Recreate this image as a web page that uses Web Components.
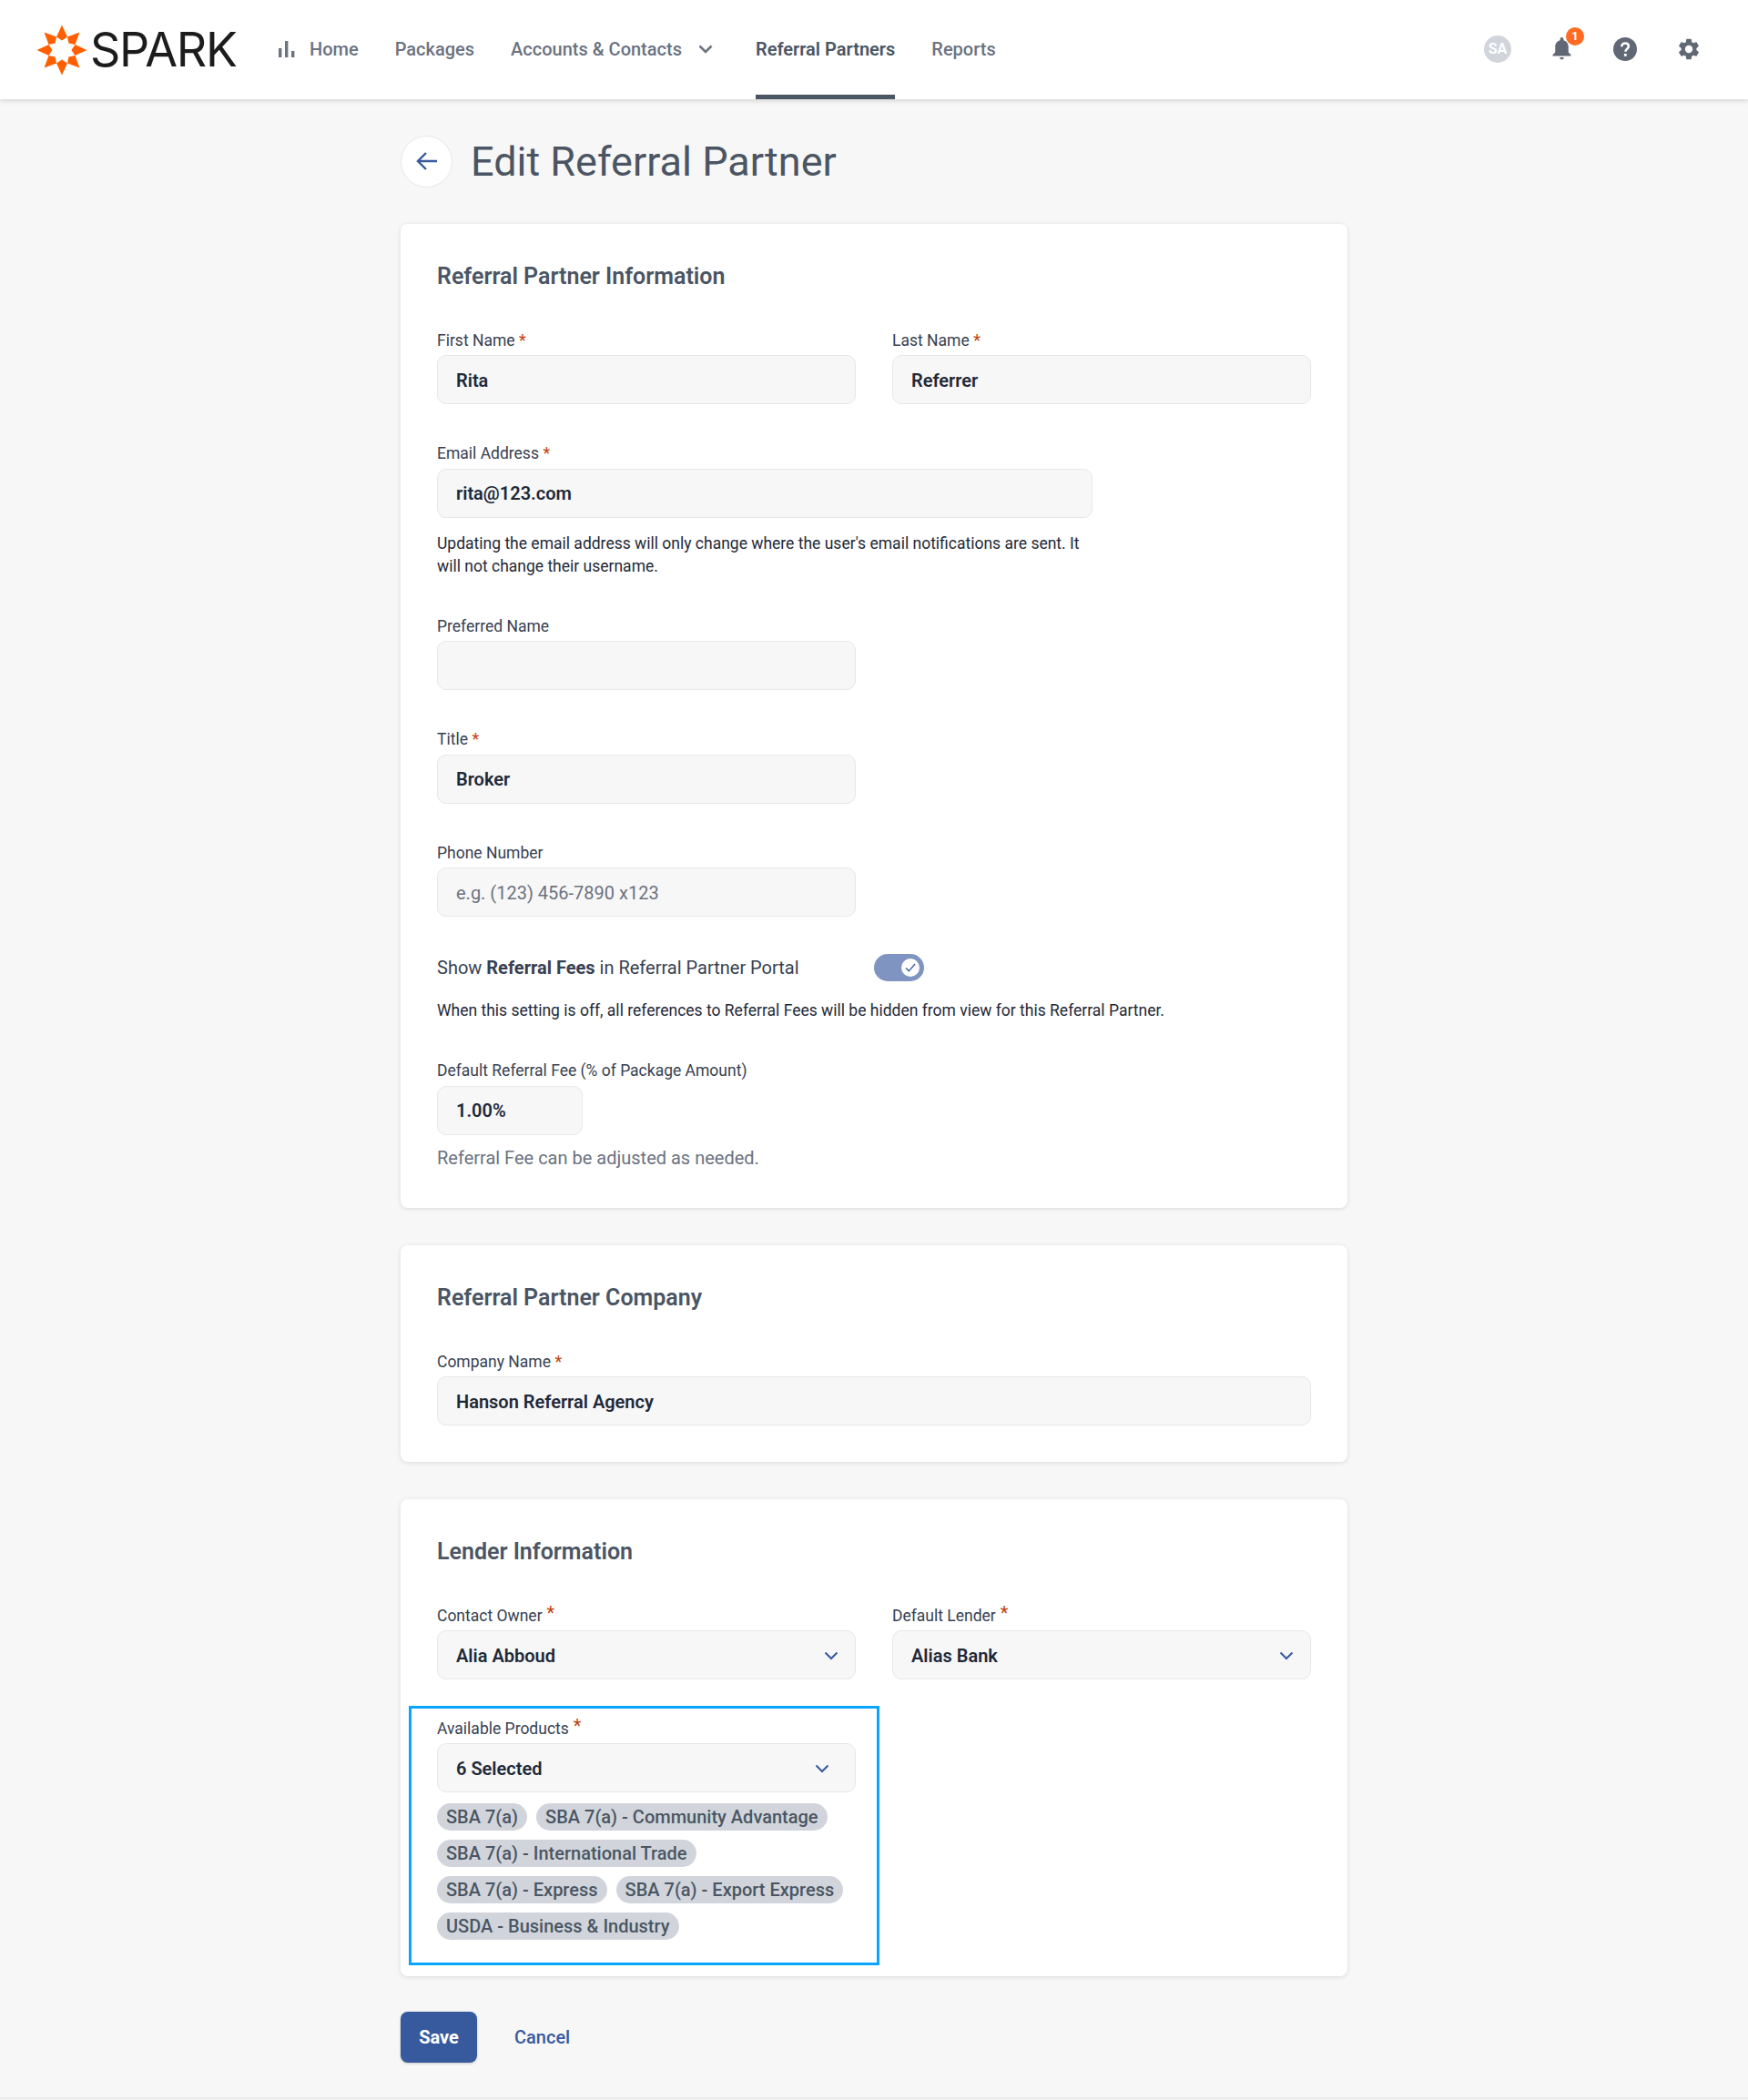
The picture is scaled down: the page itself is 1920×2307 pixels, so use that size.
<!DOCTYPE html>
<html lang="en">
<head>
<meta charset="utf-8">
<title>Edit Referral Partner</title>
<style>
  html, body { margin: 0; padding: 0; }
  body {
    background: #f7f7f7;
    color: #1f2937;
    font-family: Roboto, "Liberation Sans", sans-serif;
    font-size: 18px;
    min-height: 2307px;
  }
  b { font-weight: 700; }
</style>
</head>
<body>
<app-header></app-header>
<app-page>
  <page-title slot="title">Edit Referral Partner</page-title>

  <form-card heading="Referral Partner Information" gap="40.5">
    <form-row>
      <form-field label="First Name" required value="Rita"></form-field>
      <form-field label="Last Name" required value="Referrer"></form-field>
    </form-row>
    <form-field label="Email Address" required value="rita@123.com" width="720">
      <help-text style="width:720px">Updating the email address will only change where the user's email notifications are sent. It will not change their username.</help-text>
    </form-field>
    <form-field label="Preferred Name" value="" width="460"></form-field>
    <form-field label="Title" required value="Broker" width="460"></form-field>
    <form-field label="Phone Number" placeholder="e.g. (123) 456-7890 x123" width="460"></form-field>
    <toggle-row>
      <span slot="label">Show <b>Referral Fees</b> in Referral Partner Portal</span>
      When this setting is off, all references to Referral Fees will be hidden from view for this Referral Partner.
    </toggle-row>
    <form-field label="Default Referral Fee (% of Package Amount)" value="1.00%" width="160">
      <help-text muted>Referral Fee can be adjusted as needed.</help-text>
    </form-field>
  </form-card>

  <form-card heading="Referral Partner Company">
    <form-field label="Company Name" required value="Hanson Referral Agency"></form-field>
  </form-card>

  <form-card heading="Lender Information" gap="40">
    <form-row>
      <form-field label="Contact Owner" required raised value="Alia Abboud" select></form-field>
      <form-field label="Default Lender" required raised value="Alias Bank" select></form-field>
    </form-row>
    <product-picker></product-picker>
  </form-card>

  <form-actions></form-actions>
</app-page>
<page-foot></page-foot>

<template id="header-tpl">
  <style>
    :host {
      display: flex;
      align-items: stretch;
      height: 109px;
      background: #fff;
      box-shadow: 0 1px 6px rgba(0, 0, 0, .18);
      position: relative;
      z-index: 2;
      padding: 0 50px 0 40px;
    }
    .brand { display: flex; align-items: center; gap: 3px; width: 265px; flex: none; }
    .brand span { font: 400 52px/1 Inter, Roboto, sans-serif; color: #1c1c1c; letter-spacing: -1.3px; }
    nav { display: flex; align-items: stretch; gap: 40px; flex: 1; padding-left: 1px; }
    nav a {
      display: flex;
      align-items: center;
      gap: 16px;
      color: #6b7280;
      font: 500 20px Roboto, sans-serif;
      border-bottom: 5px solid transparent;
      border-top: 4px solid transparent;
    }
    nav a.on { color: #4b5563; font-weight: 600; border-bottom-color: #4b5563; }
    .icons { display: flex; align-items: center; gap: 40px; padding-bottom: 2px; }
    .icons > * { width: 30px; height: 30px; display: flex; align-items: center; justify-content: center; position: relative; flex: none; }
    .avatar { border-radius: 50%; background: #d1d5db; color: #fff; font: 700 16px Roboto, sans-serif; }
    .badge {
      position: absolute; top: -9px; left: 20px; width: 20px; height: 20px; border-radius: 50%;
      background: #ff6b22; color: #fff; font: 700 13px/20px Roboto, sans-serif; text-align: center;
    }
  </style>
  <div class="brand">
    <svg width="56" height="56" viewBox="-28 -28 56 56" fill="#ff5f00">
      <path d="M0-27.500 6-14.500 0-10.500-6-14.500Z"/>
      <path transform="rotate(45)" d="M0-27.500 6-14.500 0-10.500-6-14.500Z"/>
      <path transform="rotate(90)" d="M0-27.500 6-14.500 0-10.500-6-14.500Z"/>
      <path transform="rotate(135)" d="M0-27.500 6-14.500 0-10.500-6-14.500Z"/>
      <path transform="rotate(180)" d="M0-27.500 6-14.500 0-10.500-6-14.500Z"/>
      <path transform="rotate(225)" d="M0-27.500 6-14.500 0-10.500-6-14.500Z"/>
      <path transform="rotate(270)" d="M0-27.500 6-14.500 0-10.500-6-14.500Z"/>
      <path transform="rotate(315)" d="M0-27.500 6-14.500 0-10.500-6-14.500Z"/>
    </svg>
    <span>SPARK</span>
  </div>
  <nav>
    <a>
      <svg width="18" height="18" viewBox="0 0 18 18" fill="#6b7280"><rect x="0" y="8" width="3.400" height="10"/><rect x="7" y="0" width="3.400" height="18"/><rect x="14" y="11" width="3.400" height="7"/></svg>
      Home
    </a>
    <a>Packages</a>
    <a style="gap:18px;margin-right:7px">Accounts &amp; Contacts
      <svg width="16" height="10" viewBox="0 0 16 10" fill="none" stroke="#6b7280" stroke-width="2.500"><path d="M1.500 1.500 8 8l6.500-6.500"/></svg>
    </a>
    <a class="on">Referral Partners</a>
    <a>Reports</a>
  </nav>
  <div class="icons">
    <div class="avatar">SA</div>
    <div>
      <svg width="21" height="25" viewBox="0 0 22 26" fill="#616875"><path d="M11 0a2 2 0 0 1 2 2v1.200c3.700.9 5.600 4 5.600 7.800v6.200L21.500 20v1.400H.5V20l2.900-2.800V11c0-3.800 1.900-6.900 5.600-7.800V2a2 2 0 0 1 2-2ZM8.500 23h5a2.500 2.500 0 0 1-5 0Z"/></svg>
      <span class="badge">1</span>
    </div>
    <div>
      <svg width="26" height="26" viewBox="0 0 26 26"><circle cx="13" cy="13" r="13" fill="#616875"/><path d="M9.300 10.200c0-2.200 1.700-3.700 3.900-3.700s3.700 1.400 3.700 3.300c0 2.900-3.500 3-3.500 6" fill="none" stroke="#fff" stroke-width="2.500"/><rect x="11.900" y="18" width="2.800" height="2.800" fill="#fff"/></svg>
    </div>
    <div>
      <svg width="28" height="28" viewBox="0 0 24 24" fill="#616875"><path d="M19.140 12.940c.04-.3.060-.61.060-.94 0-.32-.020-.64-.070-.94l2.030-1.580a.49.49 0 0 0 .12-.61l-1.920-3.320a.488.488 0 0 0-.59-.22l-2.390.96c-.5-.38-1.030-.7-1.620-.94l-.36-2.540a.484.484 0 0 0-.48-.41h-3.840c-.24 0-.43.170-.47.41l-.36 2.540c-.59.24-1.130.57-1.620.94l-2.390-.96c-.22-.080-.47 0-.59.22L2.740 8.870c-.12.210-.080.47.12.61l2.030 1.580c-.05.3-.09.63-.09.94s.020.64.070.94l-2.030 1.580a.49.49 0 0 0-.12.61l1.920 3.320c.12.220.37.290.59.220l2.390-.96c.5.380 1.030.7 1.620.94l.36 2.540c.05.240.24.410.48.41h3.840c.24 0 .44-.17.47-.41l.36-2.540c.59-.24 1.130-.56 1.620-.94l2.390.96c.22.080.47 0 .59-.22l1.920-3.320c.12-.22.070-.47-.12-.61l-2.010-1.580ZM12 15.600A3.610 3.610 0 0 1 8.400 12 3.610 3.610 0 0 1 12 8.400a3.610 3.610 0 0 1 3.600 3.600 3.610 3.610 0 0 1-3.600 3.600Z"/></svg>
    </div>
  </div>
</template>

<template id="page-tpl">
  <style>
    :host { display: block; width: 1040px; margin: 0 auto; padding: 40px 0 0; }
    .title { margin-bottom: 41px; }
    .stack { display: flex; flex-direction: column; gap: 41px; }
  </style>
  <div class="title"><slot name="title"></slot></div>
  <div class="stack"><slot></slot></div>
</template>

<template id="title-tpl">
  <style>
    :host { display: flex; align-items: center; gap: 20px; height: 56px; }
    .back {
      width: 57px; height: 57px; box-sizing: border-box; border-radius: 50%;
      background: #fff; border: 1px solid #e5e7eb;
      display: flex; align-items: center; justify-content: center; flex: none;
    }
    h1 { margin: 0; font: 400 45px/1 Roboto, sans-serif; color: #4b5563; }
  </style>
  <div class="back">
    <svg width="24" height="22" viewBox="0 0 24 22" fill="none" stroke="#375a9e" stroke-width="2.400"><path d="M23 11H2M11 2l-9 9 9 9"/></svg>
  </div>
  <h1><slot></slot></h1>
</template>

<template id="card-tpl">
  <style>
    :host {
      display: block; background: #fff; border-radius: 8px;
      box-shadow: 0 1px 5px rgba(0, 0, 0, .12);
      padding: 40px;
    }
    h2 { margin: 0 0 39px; padding-top: 1px; font: 600 25px/34px Roboto, sans-serif; color: #4b5563; }
    .body { display: flex; flex-direction: column; }
  </style>
  <h2></h2>
  <div class="body"><slot></slot></div>
</template>

<template id="row-tpl">
  <style>
    :host { display: grid; grid-template-columns: 460px 460px; gap: 40px; }
  </style>
  <slot></slot>
</template>

<template id="field-tpl">
  <style>
    :host { display: block; }
    label { display: block; height: 24px; font: 400 17.5px/24px Roboto, sans-serif; color: #374151; padding-top: 1.500px; margin-bottom: 4.500px; }
    .req { color: #c2410c; font-size: 18px; line-height: 0; }
    .req.up { position: relative; top: -2px; font-size: 20px; }
    .box {
      box-sizing: border-box; height: 54px; padding: 1px 20px 0;
      display: flex; align-items: center; justify-content: space-between;
      background: #f7f7f7; border: 1px solid #e5e7eb; border-radius: 10px;
      font: 600 20px Roboto, sans-serif; color: #1f2937;
    }
    .box.ph { font-weight: 400; color: #6b7280; }
    svg { flex: none; margin-right: -2px; }
  </style>
  <label></label>
  <div class="box"></div>
  <slot></slot>
</template>

<template id="help-tpl">
  <style>
    :host { display: block; font: 400 17.5px/25px Roboto, sans-serif; color: #1f2937; margin: 16px 0 -1px; }
    :host([muted]) { color: #6b7280; font-size: 20px; margin: 13px 0 2.500px; }
  </style>
  <slot></slot>
</template>

<template id="toggle-tpl">
  <style>
    :host { display: block; margin-bottom: -1px; }
    .line { display: flex; align-items: center; height: 30px; font: 400 20px Roboto, sans-serif; color: #374151; }
    .label { width: 480px; flex: none; }
    .switch {
      width: 55px; height: 30px; border-radius: 15px; background: #7f94c0;
      display: flex; align-items: center; justify-content: flex-end; padding-right: 5px; box-sizing: border-box;
    }
    .knob { width: 20px; height: 20px; border-radius: 50%; background: #fff; display: flex; align-items: center; justify-content: center; }
    .text { margin-top: 20.500px; font: 400 17.5px/25px Roboto, sans-serif; color: #1f2937; }
  </style>
  <div class="line">
    <span class="label"><slot name="label"></slot></span>
    <span class="switch"><span class="knob">
      <svg width="12" height="10" viewBox="0 0 12 10" fill="none" stroke="#375a9e" stroke-width="1.300"><path d="M1 5.500 4.300 8.800 11 1"/></svg>
    </span></span>
  </div>
  <div class="text"><slot></slot></div>
</template>

<template id="picker-tpl">
  <style>
    :host { display: block; position: relative; width: 460px; }
    .frame {
      position: absolute; left: -31px; top: -11px; width: 517px; height: 285px;
      box-sizing: border-box; border: 3px solid #0aa5ff; pointer-events: none;
    }
    .chips { display: flex; flex-wrap: wrap; gap: 10px; margin-top: 11.500px; }
    .chip {
      height: 30px; padding: 0 10px; border-radius: 15px; background: #d1d5db; color: #4b5563;
      font: 500 20px/30px Roboto, sans-serif; white-space: nowrap;
    }
  </style>
  <div class="frame"></div>
  <form-field label="Available Products" required raised value="6 Selected" select chevron-left></form-field>
  <div class="chips">
    <span class="chip">SBA 7(a)</span>
    <span class="chip">SBA 7(a) - Community Advantage</span>
    <span class="chip">SBA 7(a) - International Trade</span>
    <span class="chip">SBA 7(a) - Express</span>
    <span class="chip">SBA 7(a) - Export Express</span>
    <span class="chip">USDA - Business &amp; Industry</span>
  </div>
</template>

<template id="actions-tpl">
  <style>
    :host { display: flex; align-items: center; gap: 41px; height: 56px; margin-top: -1.500px; }
    .save {
      width: 84px; height: 56px; border-radius: 8px; background: #375a9e; color: #fff;
      font: 700 20px/56px Roboto, sans-serif; text-align: center;
      box-shadow: 0 1px 3px rgba(0, 0, 0, .2);
    }
    .cancel { color: #375a9e; font: 500 20px Roboto, sans-serif; }
  </style>
  <div class="save">Save</div>
  <div class="cancel">Cancel</div>
</template>

<template id="foot-tpl">
  <style>
    :host { display: block; height: 3px; margin-top: 38px; background: #f0f0f0; border-top: 1px solid #e8e8e8; box-sizing: border-box; }
  </style>
</template>

<script>
  const chevron = `<svg width="16" height="10" viewBox="0 0 16 10" fill="none" stroke="#375a9e" stroke-width="2"><path d="M1.500 1.500 8 8l6.500-6.500"/></svg>`

  // stamps a template into an open shadow root
  class Base extends HTMLElement {
    constructor(id) {
      super()
      this.attachShadow({ mode: "open" })
      this.shadowRoot.appendChild(document.getElementById(id).content.cloneNode(true))
    }
  }

  customElements.define("app-header", class extends Base { constructor() { super("header-tpl") } })
  customElements.define("app-page", class extends Base { constructor() { super("page-tpl") } })
  customElements.define("page-title", class extends Base { constructor() { super("title-tpl") } })
  customElements.define("form-row", class extends Base { constructor() { super("row-tpl") } })
  customElements.define("help-text", class extends Base { constructor() { super("help-tpl") } })
  customElements.define("toggle-row", class extends Base { constructor() { super("toggle-tpl") } })
  customElements.define("product-picker", class extends Base { constructor() { super("picker-tpl") } })
  customElements.define("form-actions", class extends Base { constructor() { super("actions-tpl") } })
  customElements.define("page-foot", class extends Base { constructor() { super("foot-tpl") } })

  customElements.define("form-card", class extends Base {
    constructor() { super("card-tpl") }
    connectedCallback() {
      this.shadowRoot.querySelector("h2").textContent = this.getAttribute("heading")
      const gap = this.getAttribute("gap")
      if (gap) this.shadowRoot.querySelector(".body").style.gap = gap + "px"
    }
  })

  customElements.define("form-field", class extends Base {
    constructor() { super("field-tpl") }
    connectedCallback() {
      const root = this.shadowRoot
      const label = root.querySelector("label")
      label.textContent = this.getAttribute("label")
      if (this.hasAttribute("required")) {
        const star = document.createElement("span")
        star.className = this.hasAttribute("raised") ? "req up" : "req"
        star.textContent = " *"
        label.appendChild(star)
      }
      const box = root.querySelector(".box")
      const text = document.createElement("span")
      const placeholder = this.getAttribute("placeholder")
      text.textContent = placeholder || this.getAttribute("value") || ""
      box.appendChild(text)
      if (placeholder) box.classList.add("ph")
      if (this.hasAttribute("select")) {
        box.insertAdjacentHTML("beforeend", chevron)
        if (this.hasAttribute("chevron-left")) box.querySelector("svg").style.marginRight = "8px"
      }
      if (this.hasAttribute("width")) box.style.width = this.getAttribute("width") + "px"
    }
  })
</script>
</body>
</html>
